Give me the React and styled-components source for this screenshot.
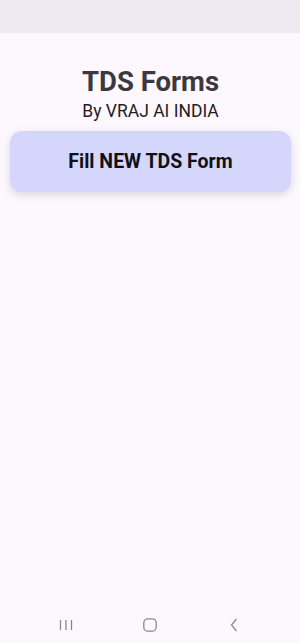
import styled, { createGlobalStyle } from "styled-components";

const GlobalStyle = createGlobalStyle`
  html, body {
    margin: 0;
    padding: 0;
    background: #fdf7fe;
  }
  #root {
    height: 643px;
  }
`;

const Screen = styled.div`
  width: 300px;
  height: 643px;
  display: flex;
  flex-direction: column;
  background: #fdf7fe;
  font-family: Roboto, "Noto Sans", sans-serif;
  overflow: hidden;
`;

const StatusBar = styled.div`
  height: 33px;
  flex-shrink: 0;
  background: #efe9f1;
`;

const Content = styled.div`
  flex: 1;
  display: flex;
  flex-direction: column;
  align-items: center;
  padding: 32px 9px 0 10px;
`;

const Title = styled.h1`
  margin: 0;
  font-size: 27.5px;
  line-height: 34px;
  font-weight: 700;
  color: #3b393e;
`;

const Subtitle = styled.div`
  margin-top: 1px;
  font-size: 17.5px;
  line-height: 23px;
  color: #1f1d22;
`;

const FillButton = styled.button`
  margin-top: 8px;
  width: 100%;
  height: 61px;
  border: none;
  border-radius: 12px;
  background: #d5d6fc;
  box-shadow: 0 3px 8px rgba(0, 0, 0, 0.14);
  font-family: inherit;
  font-size: 19.5px;
  font-weight: 700;
  color: #111014;
  cursor: pointer;
`;

const NavBar = styled.div`
  height: 43px;
  flex-shrink: 0;
  display: grid;
  grid-template-columns: repeat(3, 1fr);
  align-items: center;
  justify-items: center;
  padding: 6px 24px 0;
  box-sizing: border-box;
`;

const NavIcon = styled.svg`
  width: 16px;
  height: 16px;
  stroke: #8a878d;
  fill: none;
  stroke-width: 1.3;
`;

export default function App() {
  return (
    <Screen>
      <GlobalStyle />
      <StatusBar />
      <Content>
        <Title>TDS Forms</Title>
        <Subtitle>By VRAJ AI INDIA</Subtitle>
        <FillButton>Fill NEW TDS Form</FillButton>
      </Content>
      <NavBar>
        <NavIcon viewBox="0 0 16 16">
          <path d="M2.5 3v10M8 3v10M13.5 3v10" />
        </NavIcon>
        <NavIcon viewBox="0 0 16 16">
          <rect x="1.8" y="1.8" width="12.4" height="12.4" rx="4" />
        </NavIcon>
        <NavIcon viewBox="0 0 16 16">
          <path d="M10.5 2 L5.5 8 L10.5 14" />
        </NavIcon>
      </NavBar>
    </Screen>
  );
}
